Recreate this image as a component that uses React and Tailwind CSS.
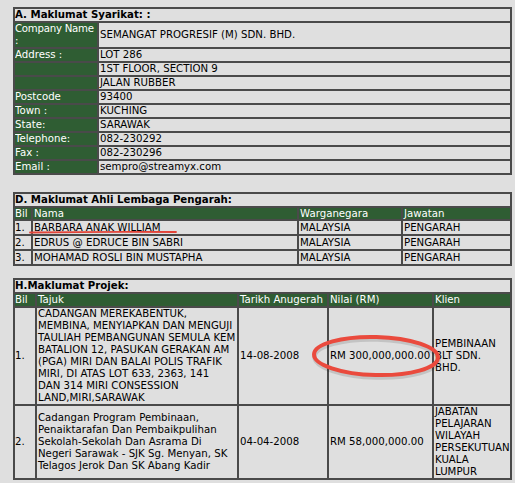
import React from "react";

const G = "bg-[#2f5d33] text-white";
const C = "border border-[#4a4a4a]";

function T1Row({ label, value, h = "h-[14px]" }) {
  return (
    <>
      <div className={`${C} ${G} ${h} whitespace-nowrap overflow-hidden`}>{label}</div>
      <div className={`${C} ${h} pl-px whitespace-nowrap flex items-center`}>{value}</div>
    </>
  );
}

export default function App() {
  const t2 = [
    ["1.", "BARBARA ANAK WILLIAM"],
    ["2.", "EDRUS @ EDRUCE BIN SABRI"],
    ["3.", "MOHAMAD ROSLI BIN MUSTAPHA"],
  ];
  return (
    <div className="relative w-[515px] h-[483px] overflow-hidden bg-[#dfdfdf] text-black font-['DejaVu_Sans',sans-serif] text-[10.2px] leading-[12px] pt-[7px]">
      {/* Table A */}
      <div className={`ml-[13px] w-[499px] ${C} grid grid-cols-[84px_413px]`}>
        <div className={`${C} col-span-2 h-[14px] font-bold whitespace-nowrap`}>A. Maklumat Syarikat: :</div>
        <div className={`${C} ${G} h-[26px] whitespace-nowrap overflow-hidden tracking-[-0.25px]`}>
          Company Name
          <br />:
        </div>
        <div className={`${C} h-[26px] pl-px flex items-center whitespace-nowrap`}>
          SEMANGAT PROGRESIF (M) SDN. BHD.
        </div>
        <T1Row label="Address :" value="LOT 286" />
        <T1Row label="" value="1ST FLOOR, SECTION 9" />
        <T1Row label="" value="JALAN RUBBER" />
        <T1Row label="Postcode" value="93400" />
        <T1Row label="Town :" value="KUCHING" />
        <T1Row label="State:" value="SARAWAK" />
        <T1Row label="Telephone:" value="082-230292" />
        <T1Row label="Fax :" value="082-230296" />
        <T1Row label="Email :" value="sempro@streamyx.com" />
      </div>

      {/* Table D */}
      <div className={`mt-[17px] ml-[13px] w-[499px] ${C} grid grid-cols-[18px_266px_104px_109px]`}>
        <div className={`${C} col-span-4 h-[14px] font-bold whitespace-nowrap`}>D. Maklumat Ahli Lembaga Pengarah:</div>
        <div className={`${C} ${G} h-[13px] leading-[11px]`}>Bil</div>
        <div className={`${C} ${G} h-[13px] leading-[11px] pl-px`}>Nama</div>
        <div className={`${C} ${G} h-[13px] leading-[11px] pl-px`}>Warganegara</div>
        <div className={`${C} ${G} h-[13px] leading-[11px] pl-px`}>Jawatan</div>
        {t2.map(([b, n]) => (
          <React.Fragment key={b}>
            <div className={`${C} h-[15px] flex items-center`}>{b}</div>
            <div className={`${C} h-[15px] pl-px flex items-center whitespace-nowrap`}>{n}</div>
            <div className={`${C} h-[15px] pl-px flex items-center`}>MALAYSIA</div>
            <div className={`${C} h-[15px] pl-px flex items-center`}>PENGARAH</div>
          </React.Fragment>
        ))}
      </div>

      {/* Table H */}
      <div className={`mt-[12px] ml-[13px] w-[499px] ${C} grid grid-cols-[22px_202px_90px_105px_78px]`}>
        <div className={`${C} col-span-5 h-[14px] font-bold whitespace-nowrap`}>H.Maklumat Projek:</div>
        <div className={`${C} ${G} h-[14px]`}>Bil</div>
        <div className={`${C} ${G} h-[14px] pl-px`}>Tajuk</div>
        <div className={`${C} ${G} h-[14px] pl-px whitespace-nowrap`}>Tarikh Anugerah</div>
        <div className={`${C} ${G} h-[14px] pl-px`}>Nilai (RM)</div>
        <div className={`${C} ${G} h-[14px] pl-px`}>Klien</div>

        <div className={`${C} h-[98px] flex items-center`}>1.</div>
        <div className={`${C} h-[98px] pl-px flex items-center whitespace-nowrap`}>
          <div>
            CADANGAN MEREKABENTUK,
            <br />
            MEMBINA, MENYIAPKAN DAN MENGUJI
            <br />
            TAULIAH PEMBANGUNAN SEMULA KEM
            <br />
            BATALION 12, PASUKAN GERAKAN AM
            <br />
            (PGA) MIRI DAN BALAI POLIS TRAFIK
            <br />
            MIRI, DI ATAS LOT 633, 2363, 141
            <br />
            DAN 314 MIRI CONSESSION
            <br />
            LAND,MIRI,SARAWAK
          </div>
        </div>
        <div className={`${C} h-[98px] pl-px flex items-center`}>14-08-2008</div>
        <div className={`${C} h-[98px] pl-px flex items-center whitespace-nowrap`}>RM 300,000,000.00</div>
        <div className={`${C} h-[98px] pl-px flex items-center whitespace-nowrap`}>
          <div>
            PEMBINAAN
            <br />
            BLT SDN.
            <br />
            BHD.
          </div>
        </div>

        <div className={`${C} h-[74px] flex items-center`}>2.</div>
        <div className={`${C} h-[74px] pl-px flex items-center whitespace-nowrap`}>
          <div>
            Cadangan Program Pembinaan,
            <br />
            Penaiktarafan Dan Pembaikpulihan
            <br />
            Sekolah-Sekolah Dan Asrama Di
            <br />
            Negeri Sarawak - SJK Sg. Menyan, SK
            <br />
            Telagos Jerok Dan SK Abang Kadir
          </div>
        </div>
        <div className={`${C} h-[74px] pl-px flex items-center`}>04-04-2008</div>
        <div className={`${C} h-[74px] pl-px flex items-center whitespace-nowrap`}>RM 58,000,000.00</div>
        <div className={`${C} h-[74px] pl-px flex items-center whitespace-nowrap`}>
          <div>
            JABATAN
            <br />
            PELAJARAN
            <br />
            WILAYAH
            <br />
            PERSEKUTUAN
            <br />
            KUALA
            <br />
            LUMPUR
          </div>
        </div>
      </div>

      {/* annotations */}
      <svg className="absolute left-0 top-0 pointer-events-none" width="515" height="483">
        <path d="M30 232.5 Q100 231.5 176 232" stroke="#e2453a" strokeWidth="1.8" fill="none" strokeLinecap="round" />
        <ellipse cx="376" cy="357" rx="62" ry="19" fill="none" stroke="#000" strokeOpacity="0.12" strokeWidth="4.5" transform="translate(0.5 1.5) rotate(1.5 376 357)" />
        <ellipse cx="376" cy="356" rx="62" ry="19" fill="none" stroke="#ea4a3d" strokeWidth="4" transform="rotate(1.5 376 356)" />
      </svg>
    </div>
  );
}
